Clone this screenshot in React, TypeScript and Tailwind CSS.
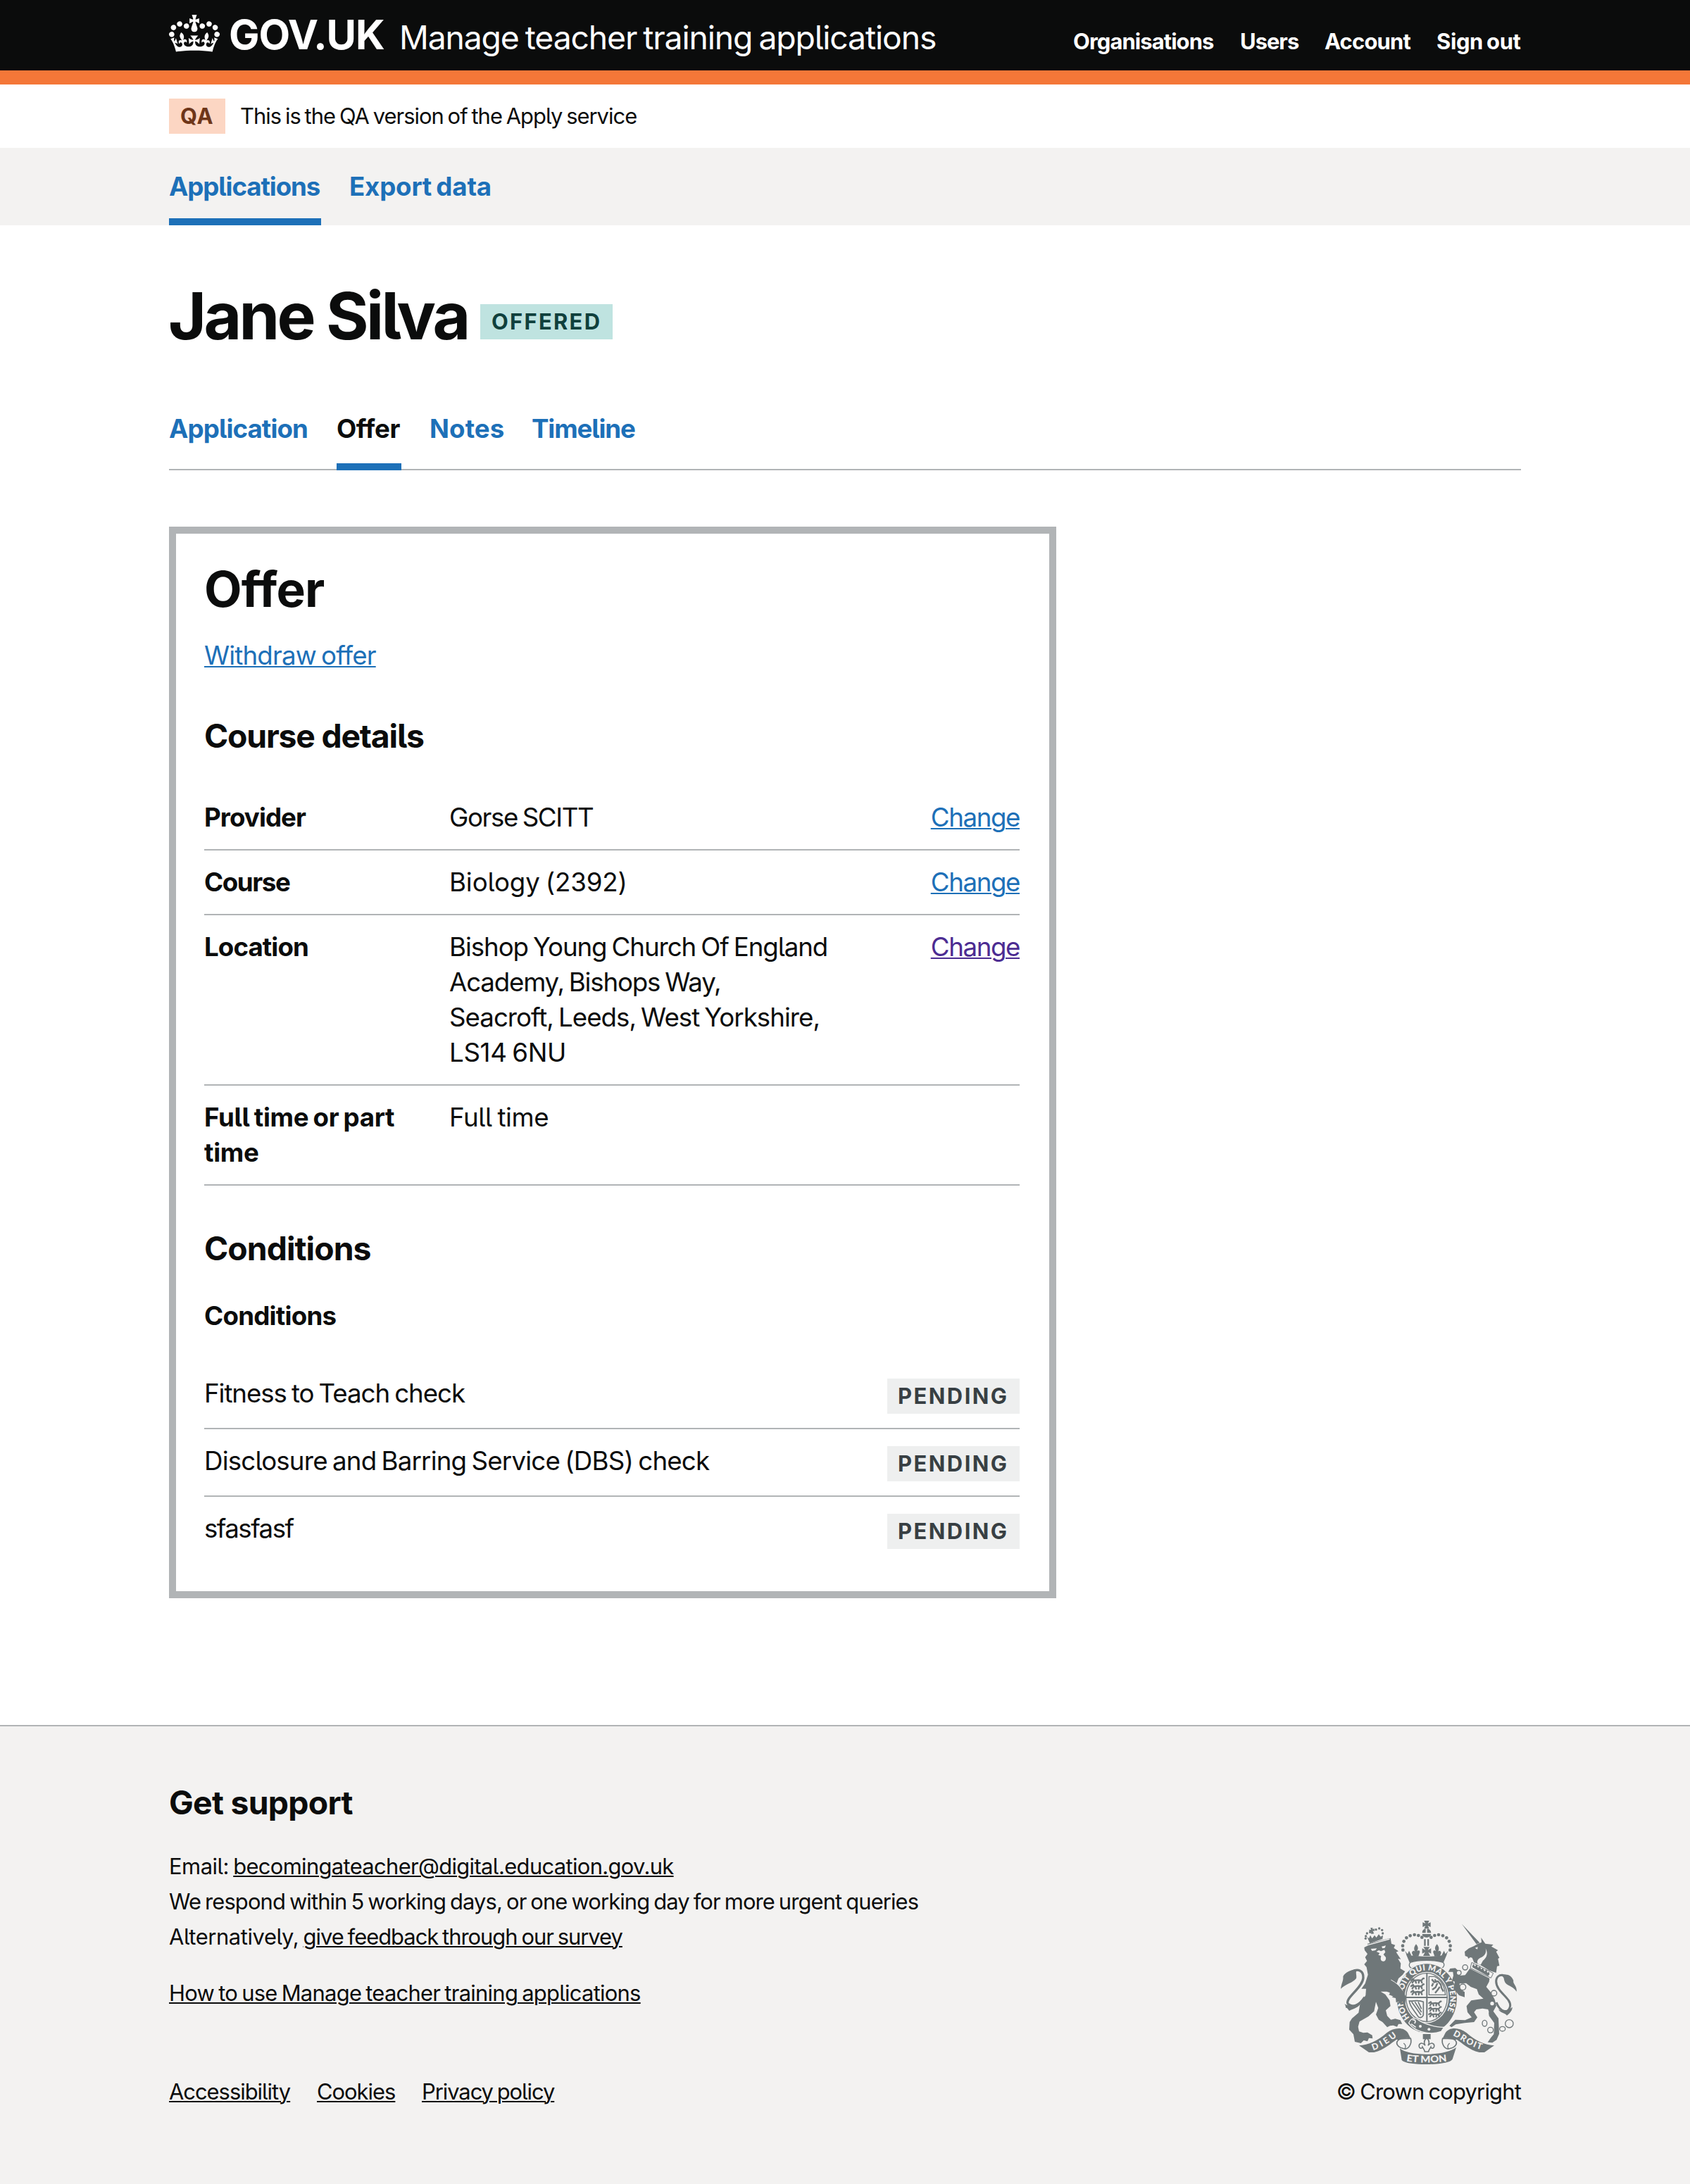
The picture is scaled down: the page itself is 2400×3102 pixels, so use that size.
function Crown() {
  return (
    <svg viewBox="0 0 132 97" className="mt-[2px] h-[53px] w-[72px] shrink-0 self-start" fill="currentColor" aria-hidden="true">
      <path fillRule="evenodd" d="M25 30.2c3.5 1.5 7.7-.2 9.1-3.7 1.5-3.6-.2-7.8-3.9-9.2-3.6-1.4-7.6.3-9.1 3.9-1.4 3.5.3 7.5 3.9 9zM9 39.5c3.6 1.5 7.8-.2 9.2-3.7 1.5-3.6-.2-7.8-3.9-9.1-3.6-1.5-7.6.2-9.1 3.8-1.4 3.5.3 7.5 3.8 9zM4.4 57.2c3.5 1.5 7.7-.2 9.1-3.8 1.5-3.6-.2-7.7-3.9-9.1-3.5-1.5-7.6.3-9.1 3.8-1.4 3.5.3 7.6 3.9 9.1zm38.3-21.4c3.5 1.5 7.7-.2 9.1-3.8 1.5-3.6-.2-7.7-3.9-9.1-3.6-1.5-7.6.3-9.1 3.8-1.3 3.6.4 7.7 3.9 9.1zm64.4-5.6c-3.6 1.5-7.8-.2-9.1-3.7-1.5-3.6.2-7.8 3.8-9.2 3.6-1.4 7.7.3 9.2 3.9 1.3 3.5-.4 7.5-3.9 9zm15.9 9.3c-3.6 1.5-7.7-.2-9.1-3.7-1.5-3.6.2-7.8 3.7-9.1 3.6-1.5 7.7.2 9.2 3.8 1.5 3.5-.3 7.5-3.8 9zm4.7 17.7c-3.6 1.5-7.8-.2-9.2-3.8-1.5-3.6.2-7.7 3.9-9.1 3.6-1.5 7.7.3 9.2 3.8 1.3 3.5-.4 7.6-3.9 9.1zM89.3 35.8c-3.6 1.5-7.8-.2-9.2-3.8-1.4-3.6.2-7.7 3.9-9.1 3.6-1.5 7.7.3 9.2 3.8 1.4 3.6-.3 7.7-3.9 9.1zM69.7 17.7l8.9 4.7V9.3l-8.9 2.8c-.2-.3-.5-.6-.9-.9L72.4 0H59.6l3.5 11.2c-.3.3-.6.5-.9.9l-8.8-2.8v13.1l8.8-4.7c.3.3.6.7.9.9l-5 15.4v.1c-.2.8-.4 1.6-.4 2.4 0 4.1 3.1 7.5 7 8.1h.2c.3 0 .7.1 1 .1.4 0 .7 0 1-.1h.2c4-.6 7.1-4.1 7.1-8.1 0-.8-.1-1.7-.4-2.4V34l-5.1-15.4c.4-.2.7-.6 1-.9zM66 92.8c16.9 0 32.8 1.1 47.1 3.2 4-16.9 8.9-26.7 14-33.5l-9.6-3.4c1 4.9 1.1 7.2 0 10.2-1.5-1.4-3-4.3-4.2-8.7L108.6 76c2.8-2 5-3.2 7.5-3.3-4.4 9.4-10 11.9-13.6 11.2-4.3-.8-6.3-4.6-5.6-7.9 1-4.7 5.7-5.9 8-.5 4.3-8.7-3-11.4-7.6-8.8 7.1-7.2 7.9-13.5 2.1-21.1-8 6.1-8.1 12.3-4.5 20.8-4.7-5.4-12.1-2.5-9.5 6.2 3.4-5.2 7.9-2 7.2 3.1-.6 4.3-6.4 7.8-13.5 7.2-10.3-.9-10.9-8-11.2-13.8 2.5-.5 7.1 1.8 11 7.3L80.2 60c-4.1 4.4-8 5.3-12.3 5.4 1.4-4.4 8-11.6 8-11.6H55.5s6.4 7.2 7.9 11.6c-4.2-.1-8-1-12.3-5.4l1.4 16.4c3.9-5.5 8.5-7.7 10.9-7.3-.3 5.8-.9 12.8-11.1 13.8-7.2.6-12.9-2.9-13.5-7.2-.7-5 3.8-8.3 7.1-3.1 2.7-8.7-4.6-11.6-9.4-6.2 3.7-8.5 3.6-14.7-4.6-20.8-5.8 7.6-5 13.9 2.2 21.1-4.7-2.6-11.9.1-7.7 8.8 2.3-5.5 7.1-4.2 8.1.5.7 3.3-1.3 7.1-5.7 7.9-3.5.7-9-1.8-13.5-11.2 2.5.1 4.7 1.3 7.5 3.3l-4.7-15.4c-1.2 4.4-2.7 7.2-4.3 8.7-1.1-3-.9-5.3 0-10.2l-9.5 3.4c5 6.9 9.9 16.7 14 33.5 14.8-2.1 30.8-3.2 47.7-3.2z" />
    </svg>
  );
}

const ink = "#6f7779";
const paper = "#f3f2f1";

function CrownHalf() {
  const beads = [[337, 209], [336, 191], [341, 172], [352, 157], [368, 148], [386, 144], [403, 147], [418, 155]];
  return (
    <g>
      {beads.map(([x, y]) => <circle key={`${x}-${y}`} cx={x} cy={y} r="7" />)}
      <path d="M345 212 l12 14 6-14 10 20 -16 6z" />
      <path d="M393 184 c10 12 10 20 4 30 c8-8 16 0 10 10 l-4 12 h-22 l-6-14 c0-8 8-14 14-6 c-6-10-6-20 4-32z" />
    </g>
  );
}

function Ribbon() {
  return (
    <g>
      <path d="M150 616 C190 614 230 596 268 562 C300 538 340 536 358 562 L370 586 C352 582 336 584 322 594 L310 590 C286 606 258 634 214 645 L192 645 Z" />
      <path d="M370 586 C376 608 362 632 344 630 C320 626 302 610 316 594 C326 582 352 588 370 586Z" fill={paper} stroke={ink} strokeWidth="5" />
      <path d="M344 630 C352 622 348 612 340 606" fill="none" stroke={ink} strokeWidth="4" />
    </g>
  );
}

function Lions() {
  return (
    <g fill="none" stroke={ink} strokeWidth="7" strokeLinecap="round" strokeLinejoin="round">
      {[0, 25, 50].map((y) => (
        <path key={y} transform={`translate(0 ${y})`} d="M2 10 l8-6 4 7 18-2 12 2 4 9 M13 11 l-6 9 M20 12 l3 9 M36 12 l-2 9 M44 10 c8 0 4-10 12-8" />
      ))}
    </g>
  );
}

function RoyalArms() {
  return (
    <svg viewBox="72 84 750 612" className="h-[204px] w-[250px]" fill={ink} aria-hidden="true">
      <defs>
        <path id="garter" d="M366 497 A101 118 0 1 1 503 503" />
        <path id="left-motto" d="M210 636 C248 624 280 602 318 572" />
        <path id="right-motto" d="M549 573 C588 590 622 624 682 636" />
        <path id="centre-motto" d="M351 682 C400 691 476 691 528 682" />
      </defs>
      {/* imperial crown */}
      <path d="M427 84 h22 l-6 12 12-5 v20 l-12-5 6 12 h-22 l6-12 -12 5 V91 l12 5z" />
      <path d="M419 136 a19 18 0 0 1 15-18 v18z M440 118 a19 18 0 0 1 17 18 h-17z M419 141 h38 a19 15 0 0 1 -38 0z" />
      <path d="M427 163 h7 v28 h-7z M441 163 h7 v28 h-7z" />
      <path d="M424 196 h27 l-8 13 14-7 v22 l-12-6 8 16 h-30 l8-16 -12 6 v-22 l14 7z" />
      <CrownHalf />
      <g transform="translate(875 0) scale(-1 1)"><CrownHalf /></g>
      <path d="M350 226 C375 240 500 240 525 226 L509 264 C480 252 396 252 366 264z" />
      <path d="M368 262 C400 250 476 250 508 262 C516 270 512 280 504 286 C470 268 404 268 372 286 C362 280 362 270 368 262Z" fill={paper} stroke={ink} strokeWidth="4" />
      {/* lion */}
      <g>
        {[[179, 150], [184, 138], [197, 133], [222, 122], [236, 117], [248, 124], [251, 138], [178, 160]].map(([x, y]) => <circle key={`${x}-${y}`} cx={x} cy={y} r="5" />)}
        <path d="M199 114 l10 1 -2 6 8-3 1 11 -8-2 6 12 -12 2 -1-12 -7 3 -1-10 8 2z" />
        <path d="M184 152 l8 8 6-14 8 14 10-14 8 10 10-14 8 10 10-6 -2 16 -54 18z" />
        <path d="M172 198 L188 190 L186 182 L284 158 L288 182 L304 188 L298 200 L318 214 L308 218 L328 248 L316 246 L328 266 L326 288 L346 300 L336 314 L318 330 L310 352 L340 376 L350 404 L348 436 L334 428 L332 440 L322 428 L312 430 L306 414 L290 410 L302 402 L276 400 L286 392 L268 386 L242 386 L262 398 L280 424 L284 448 L264 466 L270 490 L286 506 L304 502 L326 508 L334 524 L318 524 L312 536 L296 530 L282 532 L270 538 L250 516 L234 506 L222 484 L232 456 L222 430 L214 470 L190 492 L152 514 L146 536 L150 556 L168 562 L186 560 L206 572 L208 586 L192 584 L186 598 L170 594 L158 606 L132 600 L126 568 L108 548 L110 516 L120 500 L148 476 L154 440 L178 402 L180 374 L160 374 L176 352 L188 314 L182 282 L172 270 L184 256 L176 240 L186 226 L174 210 Z" />
        <path d="M174 410 C150 446 124 456 104 440 C84 418 164 372 168 328 C170 296 146 288 120 300" fill="none" stroke={ink} strokeWidth="10" />
        <path d="M72 374 C76 348 84 340 82 322 C90 304 116 292 146 292 C130 300 142 316 138 330 C122 350 96 352 72 374Z" />
        <path d="M88 438 C104 452 130 444 160 430 C150 456 128 458 108 468 C102 460 98 454 94 456 C92 450 94 446 88 438Z" />
        <g fill={paper}>
          <path d="M200 204 l26-2 -6 8 -14 3z M246 194 l18-4 -4 10 -10 2z" />
          <path d="M224 216 l10-6 10 4 14-6 4 10 -8 10 10 12 c4 20 -20 24 -22 6 l2-12 -12-4 6-8z" />
          <path d="M186 186 l94-26 1 4 -94 26z" />
        </g>
      </g>
      {/* unicorn body and head */}
      <g>
        <path d="M588 98 L664 178 L650 184 Z" />
        <path d="M600 216 L618 202 L640 192 L656 182 L672 176 L670 156 L688 182 L722 186 L714 194 L742 210 L734 216 L748 242 L742 246 L748 276 L738 278 L734 306 L704 296 L676 278 L660 270 L640 262 L632 242 L624 240 L616 246 L612 238 L602 234 Z" />
        <path d="M656 268 C650 256 656 246 672 240 C690 230 694 214 688 200 C704 226 690 244 678 254 L668 272Z" fill={paper} />
        <path d="M644 200 l12-4 -2 10z" fill={paper} />
        <path d="M630 262 L722 308 L712 328 L624 286Z" fill={paper} stroke={ink} strokeWidth="3" />
        <path d="M632 282 l4-14 8 10 8-8 4 14 10-6 4 14 8-6 6 14 10-8 2 14 8-4 2 10 -6 8z" />
        <path d="M735 432 C752 476 788 482 794 448 C798 412 734 388 734 342 C736 306 780 306 800 348" fill="none" stroke={ink} strokeWidth="9" />
        <path d="M756 318 C776 308 800 314 808 340 C804 352 824 362 821 386 C806 362 774 360 770 342 C766 332 770 326 756 318Z" />
        <path d="M744 462 C764 474 790 464 803 452 C804 466 792 478 780 488 C770 476 752 478 744 462Z" />
      </g>
      {/* garter and shield */}
      <ellipse cx="439" cy="415" rx="132" ry="151" fill={paper} />
      <ellipse cx="439" cy="415" rx="128" ry="147" />
      <ellipse cx="438" cy="411" rx="94" ry="109" fill={paper} />
      <ellipse cx="438" cy="411" rx="88" ry="103" fill="none" stroke={ink} strokeWidth="4" />
      <path d="M436 308 h6 v206 h-6z M350 408 h176 v6 h-176z" />
      <text fill={paper} className="font-['Lato'] text-[34px] font-extrabold"><textPath href="#garter" textLength="492" lengthAdjust="spacing">HONI SOIT QUI MAL Y PENSE</textPath></text>
      <g transform="translate(370 328)"><Lions /></g>
      <g transform="translate(446 426) scale(.95)"><Lions /></g>
      <path d="M448 322 h24 c26 12 42 36 46 78 h-70z" fill="none" stroke={ink} strokeWidth="4" />
      <path d="M460 334 l10 12 16-4 12 14 4 16 8 14 M466 350 l-6 14 M484 350 l-8 18 -14 10 M494 366 l-10 14 -10 12 M472 334 l6 8" fill="none" stroke={ink} strokeWidth="7" />
      <path d="M364 426 C384 428 402 420 424 430 L424 486 C418 500 406 500 400 490 C388 470 366 450 364 426Z M374 430 l40 56 M388 430 l28 44 M402 430 l14 30" fill="none" stroke={ink} strokeWidth="5" />
      {/* lion's paw over the garter */}
      <path d="M286 338 L322 362 L342 390 L350 410 L346 440 L334 428 L330 444 L318 430 L308 432 L306 412 L280 400Z" />
      <path d="M286 336 c22 12 40 28 50 46" fill="none" stroke={paper} strokeWidth="3" />
      <path d="M362 520 C372 496 392 496 404 508 C430 524 480 540 512 538 L500 556 C460 572 400 560 374 534Z" stroke={paper} strokeWidth="4" />
      <circle cx="411" cy="534" r="6" fill={paper} /><circle cx="448" cy="547" r="6" fill={paper} />
      <path d="M378 508 c10-6 16 6 8 14 M372 524 l20 14" fill="none" stroke={paper} strokeWidth="5" />
      {/* unicorn legs and chain, in front of the garter's edge */}
      <path d="M622 288 L706 330 L704 344 L692 366 L712 390 L728 420 L735 446 L722 470 L744 500 L747 566 L736 592 L718 604 L698 602 L712 582 L724 568 L726 520 L704 490 L700 462 L676 458 L650 462 L640 474 L654 496 L640 516 L600 520 L562 526 L544 538 L535 532 L560 506 L602 508 L630 496 L612 474 L608 448 L628 424 L680 416 L660 398 L652 376 L626 366 L606 350 L578 352 L580 374 L600 388 L600 410 L576 402 L552 372 L558 344 L546 340 L552 318 L550 302 L530 302 L538 288 L560 286 L576 300 L580 318 L602 316Z" />
      <g fill={paper} stroke={ink} strokeWidth="4">
        <circle cx="602" cy="283" r="11" /><circle cx="575" cy="306" r="10" /><circle cx="592" cy="367" r="13" /><circle cx="725" cy="393" r="12" />
        <g fill="none">
          <ellipse cx="685" cy="521" rx="10" ry="13" /><circle cx="710" cy="550" r="12" /><ellipse cx="761" cy="545" rx="12" ry="10" /><circle cx="790" cy="523" r="17" />
        </g>
      </g>
      <circle cx="717" cy="437" r="8" fill={paper} /><circle cx="695" cy="473" r="8" fill={paper} />
      {/* badge and motto */}
      <path d="M422 567 h33 v22 h-33z" />
      <path d="M438 584 c14 12 12 22 6 32 c14-18 28-8 26 4 c-2 10 -12 10 -14 2 c-4 8 -8 10 -10 20 h-16 c-2-10 -6-12 -10-20 c-2 8 -12 8 -14-2 c-2-12 12-22 26-4 c-6-10 -8-20 6-32z" fill={paper} stroke={ink} strokeWidth="5" />
      <Ribbon />
      <g transform="translate(876 0) scale(-1 1)"><Ribbon /></g>
      <path d="M324 628 C360 662 516 662 564 624 L548 674 C534 703 346 703 332 678 Z" />
      <g fill={paper} className="font-['Lato'] text-[40px] font-black">
        <text><textPath href="#centre-motto" textLength="174" lengthAdjust="spacingAndGlyphs">ET MON</textPath></text>
        <text className="text-[37px]"><textPath href="#left-motto" textLength="118" lengthAdjust="spacing">DIEU</textPath></text>
        <text className="text-[37px]"><textPath href="#right-motto" textLength="136" lengthAdjust="spacing">DROIT</textPath></text>
      </g>
    </svg>
  );
}

const tight = "whitespace-nowrap [word-spacing:-0.06em]";
const link = "underline decoration-2 underline-offset-2";

const account = [
  { label: "Organisations", style: "w-[200px] tracking-[-0.9px]" },
  { label: "Users", style: "w-[83px] tracking-[-0.98px]" },
  { label: "Account", style: "w-[122px] tracking-[-0.77px]" },
  { label: "Sign out", style: "w-[120px] tracking-[-0.35px]" },
];

const tabs = [
  { label: "Application", style: "w-[198px] tracking-[-0.9px]" },
  { label: "Offer", style: "h-[108px] w-[92px] border-b-[10px] border-[#1d70b8] tracking-[-0.4px] text-[#0b0c0c]" },
  { label: "Notes", style: "w-[105px] tracking-[0.1px]" },
  { label: "Timeline", style: "tracking-[-1.13px]" },
];

const details = [
  { key: ["Provider"], keyStyle: "tracking-[-0.94px]", value: [["Gorse SCITT", "tracking-[-1.39px]"]], action: "text-[#1d70b8]" },
  { key: ["Course"], keyStyle: "tracking-[-1.39px]", value: [["Biology (2392)", "tracking-[-0.13px]"]], action: "text-[#1d70b8]" },
  {
    key: ["Location"],
    keyStyle: "tracking-[-0.91px]",
    value: [
      ["Bishop Young Church Of England", "tracking-[-1.08px]"],
      ["Academy, Bishops Way,", "tracking-[-1.18px]"],
      ["Seacroft, Leeds, West Yorkshire,", "tracking-[-1px]"],
      ["LS14 6NU", "tracking-[-0.35px]"],
    ],
    action: "text-[#4c2c92]",
  },
  { key: ["Full time or part", "time"], keyStyle: "tracking-[-0.3px]", value: [["Full time", "tracking-[-0.4px]"]], action: "" },
];

const conditions = [
  { label: "Fitness to Teach check", style: "border-b-2 tracking-[-1.06px]" },
  { label: "Disclosure and Barring Service (DBS) check", style: "border-b-2 tracking-[-0.82px]" },
  { label: "sfasfasf", style: "tracking-[-1.55px]" },
];

export default function App() {
  return (
    <div className="min-h-[3102px] w-[2400px] bg-white font-['Inter',sans-serif] text-[#0b0c0c] [font-feature-settings:'cv05']">
      <header className="border-b-[20px] border-[#f47738] bg-[#0b0c0c] text-white">
        <div className="mx-auto flex h-[100px] w-[1920px] items-baseline pt-[19px]">
          <Crown />
          <span className="ml-[13px] w-[242px] text-[58px] leading-[60px] font-bold tracking-[-1.1px]">GOV.UK</span>
          <span className={`${tight} text-[46.3px] leading-[60px] tracking-[-1.14px]`}>Manage teacher training applications</span>
          <nav className="ml-auto flex gap-[37px] text-[30.9px] leading-10 font-[650]">
            {account.map((item) => <a key={item.label} className={`${tight} ${item.style}`}>{item.label}</a>)}
          </nav>
        </div>
      </header>

      <div className="mx-auto flex w-[1920px] py-5 text-[30.9px] leading-[50px]">
        <strong className="w-20 bg-[#fcd6c3] pl-4 font-[650] tracking-[0.8px] text-[#6e3619]">QA</strong>
        <span className={`${tight} ml-[21px] tracking-[-0.98px]`}>This is the QA version of the Apply service</span>
      </div>

      <div className="bg-[#f3f2f1]">
        <nav className="mx-auto flex h-[110px] w-[1920px] gap-10 text-[36.7px] leading-[90px] font-[650] text-[#1d70b8]">
          <a className="w-[216px] border-b-[10px] border-[#1d70b8] pt-[10px] tracking-[-1.1px]">Applications</a>
          <a className={`${tight} pt-[10px] tracking-[-0.2px]`}>Export data</a>
        </nav>
      </div>

      <main className="mx-auto w-[1920px] pt-[78px]">
        <div className="flex items-start">
          <h1 className="-ml-px w-[443px] text-[92.6px] leading-[100px] font-[650] tracking-[-3.7px] whitespace-nowrap">Jane Silva</h1>
          <strong className="mt-[34px] w-[188px] bg-[#bfe3e0] pl-4 text-[30.9px] leading-[50px] font-[650] tracking-[2.3px] text-[#10403c]">OFFERED</strong>
        </div>
        <nav className="mt-[62px] flex h-[108px] gap-10 border-b-2 border-[#b1b4b6] text-[36.7px] leading-[98px] font-[650] text-[#1d70b8]">
          {tabs.map((tab) => <a key={tab.label} className={tab.style}>{tab.label}</a>)}
        </nav>

        <section className="mt-20 w-[1260px] border-[10px] border-[#b1b4b6] pt-[39px] pr-[42px] pb-10 pl-10 text-[36.7px] leading-[50px]">
          <h2 className="text-[69.5px] leading-[80px] font-[650] tracking-[-0.7px]">Offer</h2>
          <p className="mt-[29px]"><a className={`${link} ${tight} tracking-[-0.85px] text-[#1d70b8]`}>Withdraw offer</a></p>
          <h3 className="mt-[59px] text-[46.3px] leading-[60px] font-[650] tracking-[-1.19px]">Course details</h3>
          <dl className="mt-[41px]">
            {details.map((row) => (
              <div key={row.key[0]} className="flex border-b-2 border-[#b1b4b6] py-5">
                <dt className={`w-[348px] font-[650] ${tight} ${row.keyStyle}`}>
                  {row.key.map((line) => <div key={line}>{line}</div>)}
                </dt>
                <dd>
                  {row.value.map(([line, style]) => <div key={line} className={`${tight} ${style}`}>{line}</div>)}
                </dd>
                {row.action && <dd className="ml-auto"><a className={`${link} tracking-[-1.4px] ${row.action}`}>Change</a></dd>}
              </div>
            ))}
          </dl>
          <h3 className="mt-[59px] text-[46.3px] leading-[60px] font-[650] tracking-[-0.93px]">Conditions</h3>
          <h4 className="mt-[41px] font-[650] tracking-[-0.75px]">Conditions</h4>
          <ul className="mt-10">
            {conditions.map((row, i) => (
              <li key={row.label} className={`flex items-start justify-between border-[#b1b4b6] pt-5 ${i < 2 ? "h-24" : "h-[94px]"} ${row.style}`}>
                <span className={tight}>{row.label}</span>
                <strong className="mt-1 w-[188px] bg-[#eeefef] pl-[15px] text-[30.9px] font-[650] tracking-[2.5px] text-[#383f43]">PENDING</strong>
              </li>
            ))}
          </ul>
        </section>
      </main>

      <footer className="mt-[180px] h-[652px] border-t-2 border-[#b1b4b6] bg-[#f3f2f1] pt-[78px] text-[30.9px] leading-[50px]">
        <div className="mx-auto flex w-[1920px] items-end justify-between">
          <div className={tight}>
            <h2 className="text-[46.3px] leading-[60px] font-[650] tracking-[-0.7px] [word-spacing:0]">Get support</h2>
            <p className="mt-9">
              <span className="tracking-[-0.5px]">Email: </span>
              <a className={`${link} tracking-[-0.65px]`}>becomingateacher@digital.education.gov.uk</a>
            </p>
            <p className={`${tight} tracking-[-0.88px]`}>We respond within 5 working days, or one working day for more urgent queries</p>
            <p>
              <span className="tracking-[-0.4px]">Alternatively, </span>
              <a className={`${link} ${tight} tracking-[-1px]`}>give feedback through our survey</a>
            </p>
            <p className="mt-[30px]"><a className={`${link} ${tight} tracking-[-0.72px]`}>How to use Manage teacher training applications</a></p>
            <div className="mt-[90px] flex gap-[37px]">
              <a className={`${link} w-[173px] tracking-[-1px]`}>Accessibility</a>
              <a className={`${link} w-[112px] tracking-[-1px]`}>Cookies</a>
              <a className={`${link} ${tight} tracking-[-1.05px]`}>Privacy policy</a>
            </div>
          </div>
          <div className="flex flex-col items-end gap-[14px]">
            <div className="pr-[6px]"><RoyalArms /></div>
            <span className={`${tight} tracking-[-0.8px]`}>© Crown copyright</span>
          </div>
        </div>
      </footer>
    </div>
  );
}
